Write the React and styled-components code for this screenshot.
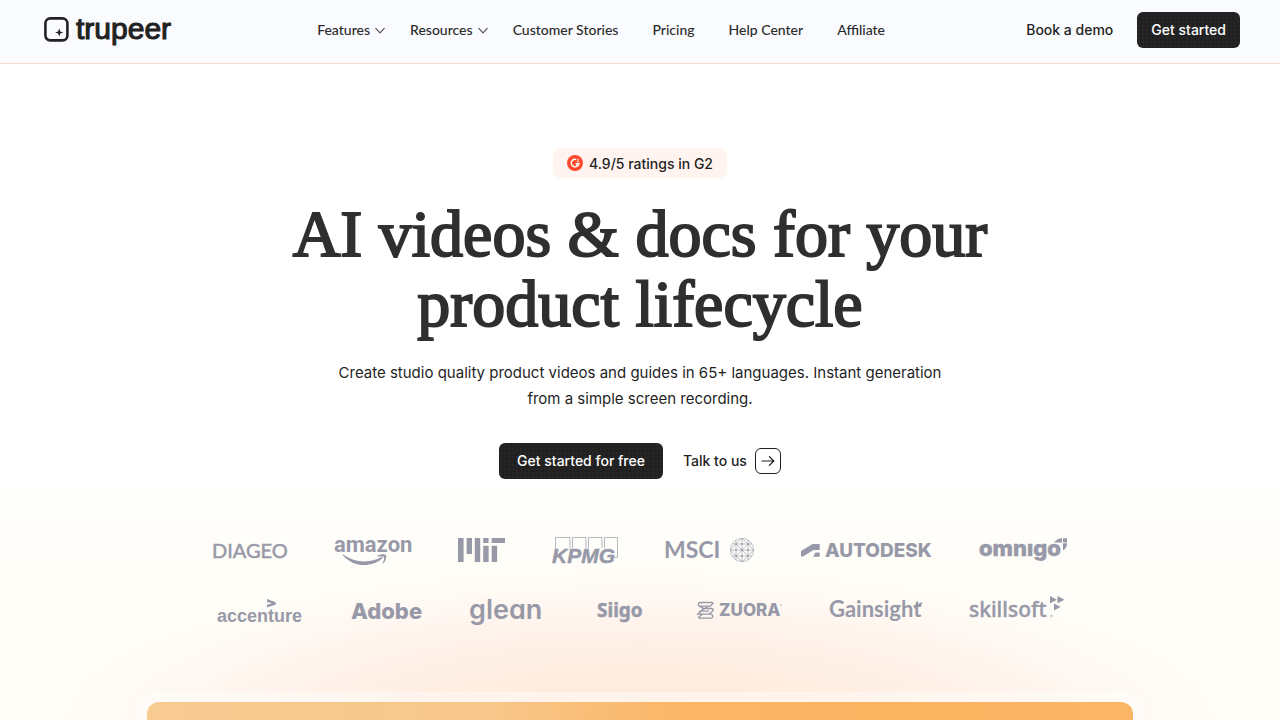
import React from 'react'
import styled, { createGlobalStyle } from 'styled-components'

//Styled-components

const GlobalStyle = createGlobalStyle`
    * {
        box-sizing: border-box;
    }
    body {
        margin: 0;
        background: #ffffff;
        color: #1f1f1f;
        font-family: Inter, sans-serif;
    }
`;

const Page = styled.div`
    min-height: 100vh;
    display: flex;
    flex-direction: column;
    overflow: hidden;
    background:
        radial-gradient(ellipse 580px 150px at 50% 100%, #ffeadb 0%, #ffeee2 40%, #fff4ed 68%, rgba(255, 250, 245, 0) 100%),
        linear-gradient(#ffffff 470px, #fffdf8 560px, #fffdf7 100%);
`;

const Header = styled.header`
    display: flex;
    align-items: center;
    justify-content: space-between;
    height: 64px;
    padding: 0 40px 4px 44px;
    background: #fafbfe;
    border-bottom: 1px solid #f8dccb;
`;

const HomeLink = styled.a`
    display: flex;
    color: #222222;
`;

const Nav = styled.nav`
    display: flex;
    align-items: center;
    gap: 34px;
`;

const NavGroup = styled.div`
    display: flex;
    gap: 24px;
    margin-right: -10px;
`;

const NavButton = styled.button`
    display: flex;
    align-items: center;
    gap: 4px;
    padding: 0;
    border: 0;
    background: none;
    color: #2b2b2b;
    font: 500 14px/20px Lato, sans-serif;
    cursor: pointer;
`;

const NavLink = styled.a`
    color: #2b2b2b;
    font: 500 14px/20px Lato, sans-serif;
    text-decoration: none;
`;

const Actions = styled.div`
    display: flex;
    align-items: center;
    gap: 24px;
`;

const TextLink = styled.a`
    display: flex;
    align-items: center;
    gap: 8px;
    color: #1f1f1f;
    font-size: 14px;
    font-weight: 500;
    line-height: 20px;
    text-decoration: none;
`;

const DarkButton = styled.button`
    height: 36px;
    padding: 0 ${props => props.$wide ? '18px' : '14px'};
    border: 0;
    border-radius: 6px;
    background-color: #212121;
    background-image: radial-gradient(#272727 1px, transparent 1px);
    background-size: 4px 4px;
    color: #ffffff;
    font: 500 14px/20px Inter, sans-serif;
    cursor: pointer;
`;

const Hero = styled.main`
    flex: 1;
    display: flex;
    flex-direction: column;
    align-items: center;
    padding-top: 84px;
`;

const Badge = styled.div`
    display: flex;
    align-items: center;
    gap: 6px;
    height: 30px;
    padding: 0 14px;
    border-radius: 8px;
    background: #fff4ef;
    font-size: 14px;
    font-weight: 500;
`;

const Title = styled.h1`
    max-width: 760px;
    margin: 21px 0 0;
    color: #2f2f2f;
    font: 400 66px/70px 'Liberation Serif', serif;
    text-align: center;
    -webkit-text-stroke: 2px #2f2f2f;
`;

const Subtitle = styled.p`
    max-width: 640px;
    margin: 21px 0 0;
    font-size: 15px;
    line-height: 26px;
    text-align: center;
`;

const Buttons = styled.div`
    display: flex;
    align-items: center;
    gap: 20px;
    margin-top: 31px;
`;

const ArrowBox = styled.span`
    display: flex;
    align-items: center;
    justify-content: center;
    width: 26px;
    height: 26px;
    border: 1px solid #1f1f1f;
    border-radius: 6px;
    background: #ffffff;
`;

const Logos = styled.div`
    display: flex;
    flex-direction: column;
    gap: 20px;
    margin-top: 51px;
    color: #9799a8;
`;

const LogoRow = styled.div`
    display: flex;
    justify-content: center;
    gap: ${props => props.$gap};
`;

const Logo = styled.svg`
    display: block;
    height: 40px;
    overflow: visible;
    fill: currentColor;
    font-family: ${props => props.$font || 'Inter'}, sans-serif;
    font-weight: ${props => props.$weight || 700};
    font-feature-settings: ${props => props.$features || 'normal'};
`;

const Frame = styled.section`
    flex: 1;
    display: flex;
    width: calc(100% - 274px);
    min-height: 28px;
    margin-top: 62px;
    padding: 10px 10px 0;
    border-radius: 20px 20px 0 0;
    background: rgba(255, 255, 255, 0.4);
`;

const VideoCard = styled.div`
    flex: 1;
    border-radius: 12px 12px 0 0;
    background: linear-gradient(100deg, #f7cb92 0%, #f8c78a 35%, #fbb565 55%, #fbb461 80%, #fab566 100%);
`;

function TrupeerLogo(){
    return (
        <svg width="132" height="40" viewBox="0 0 132 40" fill="currentColor" aria-label="trupeer">
            <rect x="1.4" y="8.4" width="22" height="22" rx="4.8" fill="none" stroke="currentColor" strokeWidth="2.6" />
            <path d="M15.2 18.400l1.100 3 3 1.100-3 1.100-1.100 3-1.100-3-3-1.100 3-1.100z" />
            <text x="32" y="29" fontFamily="Liberation Sans" fontSize="30" stroke="currentColor" strokeWidth="1.1">trupeer</text>
        </svg>
    )
}

function Chevron(){
    return (
        <svg width="12" height="12" viewBox="0 0 12 12" fill="none" stroke="#555555" strokeWidth="1.2" strokeLinecap="round" strokeLinejoin="round">
            <path d="M1.800 4.400L6 8.800 10.200 4.400" />
        </svg>
    )
}

function G2Icon(){
    return (
        <svg width="16" height="16" viewBox="0 0 16 16">
            <circle cx="8" cy="8" r="8" fill="#ff492c" />
            <path d="M9.2 4.4A3.8 3.8 0 1 0 10.4 11L9.3 9.2" fill="none" stroke="#ffffff" strokeWidth="1.5" />
            <path d="M10.4 11.2L12 8.6H8.6" fill="none" stroke="#ffffff" strokeWidth="1.4" />
            <path d="M9.9 4.6C10.3 3.7 11.8 3.9 11.7 4.9 11.6 5.7 10.1 5.9 10 6.8H11.9" fill="none" stroke="#ffffff" strokeWidth="0.8" />
        </svg>
    )
}

function ArrowIcon(){
    return (
        <svg width="14" height="12" viewBox="0 0 14 12" fill="none" stroke="#1f1f1f" strokeWidth="1.2" strokeLinecap="round" strokeLinejoin="round">
            <path d="M1 6H12.6M8.4 1.6L12.8 6 8.4 10.4" />
        </svg>
    )
}

function Clients(){
    return (
        <Logos>
            <LogoRow $gap="47px">
                <Logo width="75" $font="Lato" $weight="400">
                    <text x="-1" y="28" fontSize="20" stroke="currentColor" strokeWidth="0.5">DIAGEO</text>
                </Logo>
                <Logo width="76" $font="Roboto">
                    <text x="-1" y="22" fontSize="22">amazon</text>
                    <path d="M8.4 24.6C15 29.4 22 31.4 29.500 31.400c6.200 0 12.500-1.800 17.300-4.400.9-.4 1.500.6.7 1.200C43 32.500 36 35 29.300 35 21 35 13.600 31.600 8 25.400c-.4-.5 0-1.100.4-.8z" />
                    <path d="M42.400 25.700c2.200-1.500 7.100-2 8.500-.7 1 1.300-.2 6.100-2.500 8.400-.4.300-.8.100-.6-.4.900-2 1.900-5.100 1.200-5.900-.8-.9-4.200-.7-6.100-.5-.6.100-.9-.6-.5-.9z" />
                </Logo>
                <Logo width="47">
                    <path d="M0 8h5.600v24H0zM8.600 8H14v16H8.600zM16.800 8h5.400v24h-5.400zM25.200 8h5.400v5h-5.400zM25.200 15.700h5.400V32h-5.400zM33.700 8H47v5H33.700zM33.700 15.700h5.400V32h-5.400z" />
                </Logo>
                <Logo width="66" $font="'Liberation Sans'">
                    <path d="M3.500 22V7.500H18V18M20.500 18V7.500H34V18M36.500 18V7.500H50V18M52.500 18V7.500H65.500V27.500H62" fill="none" stroke="currentColor" strokeWidth="0.7" />
                    <text x="0" y="33" fontSize="21" fontStyle="italic" stroke="currentColor" strokeWidth="0.5">KPMG</text>
                </Logo>
                <Logo width="89" $font="Lato">
                    <text x="-1" y="28" fontSize="23">MSCI</text>
                    <g fill="none" stroke="currentColor" strokeWidth="0.6">
                        <circle cx="77" cy="20" r="11.600" />
                        <path d="M77 8.400V31.600M65.400 20H88.600M71 10V30M83 10V30M67 14H87M67 26H87M71 14L83 26M83 14L71 26M77 8.400L71 14 65.400 20 71 26 77 31.600 83 26 88.600 20 83 14z" />
                    </g>
                    <path d="M76.200 13.200h1.600v1.600h-1.600zM70.200 13.200h1.600v1.600h-1.600zM82.200 13.200h1.600v1.600h-1.600zM76.200 19.200h1.600v1.600h-1.600zM70.200 19.200h1.600v1.600h-1.600zM82.200 19.200h1.600v1.600h-1.600zM76.200 25.200h1.600v1.600h-1.600zM70.200 25.200h1.600v1.600h-1.600zM82.200 25.200h1.600v1.600h-1.600z" />
                </Logo>
                <Logo width="131" $weight="800">
                    <path d="M0 26.500V21L11.500 14H18.700V20H12.500L2 26.500zM12 26.800L14.500 22.500H18.700V26.800z" />
                    <text x="24" y="27" fontSize="19">AUTODESK</text>
                </Logo>
                <Logo width="88" $weight="800">
                    <text x="0" y="26" fontSize="22" stroke="currentColor" strokeWidth="0.5">omnıgo</text>
                    <path d="M75 12.500C77.500 9.500 80 8.300 83 8.300V12.500zM84 8.300H88V12.500H84zM84 13.300H88C88 16.500 87 18.600 84 20.500z" />
                </Logo>
            </LogoRow>
            <LogoRow $gap="48px">
                <Logo width="86" $font="'Liberation Sans'">
                    <text x="0" y="32" fontSize="18">accenture</text>
                    <path d="M50 9L58.800 12.200V14.400L50 17.600V14.700L55 13.300 50 11.900z" />
                </Logo>
                <Logo width="70" $weight="800">
                    <text x="0" y="29" fontSize="22">Adobe</text>
                </Logo>
                <Logo width="72" $weight="600" $features="'cv11'">
                    <text x="0" y="29" fontSize="27">glean</text>
                </Logo>
                <Logo width="60" $font="'Noto Sans'">
                    <text x="8" y="27" fontSize="19" stroke="currentColor" strokeWidth="0.5">Siigo</text>
                </Logo>
                <Logo width="85" $weight="800">
                    <path d="M1.500 16.200H13.500L16 13.200 14.800 12.500H3.200C1 12.500.8 15 2.200 16.200L7 18.500M5 18.500H14.500C17 18.800 16.500 20.500 15.500 21.200L11.500 24.500M12 21.200H4L.8 24.200H13.500C16.500 24.500 16.300 28.200 13.800 28.200H2.500L1.500 27.200 5.500 24.200M11.500 16.200L2.500 21.600" fill="none" stroke="currentColor" strokeWidth="1.300" />
                    <text x="22" y="26" fontSize="17">ZUORA</text>
                    <circle cx="84" cy="15" r="0.700" />
                </Logo>
                <Logo width="92" $font="Lato">
                    <text x="-1" y="27" fontSize="22">Gainsight</text>
                    <path d="M84 16.500C86.500 16 88 13.500 92 12.300V14.300C89.500 15.500 88 18 84 18.500z" />
                </Logo>
                <Logo width="94" $font="'Noto Sans'" $weight="500">
                    <text x="-1" y="27" fontSize="21" stroke="currentColor" strokeWidth="0.4">skillsoft</text>
                    <path d="M80 6L87 9.700 80 13.300zM87.500 6L94.500 9.700 87.500 13.300zM84 13.500L90.500 17 84 20.500z" />
                    <circle cx="81.500" cy="26" r="1" fill="none" stroke="currentColor" strokeWidth="0.500" />
                </Logo>
            </LogoRow>
        </Logos>
    )
}

export default function App(){
    return (
        <Page>
            <GlobalStyle />
            <Header>
                <HomeLink href="#"><TrupeerLogo /></HomeLink>
                <Nav>
                    <NavGroup>
                        <NavButton type="button">Features <Chevron /></NavButton>
                        <NavButton type="button">Resources <Chevron /></NavButton>
                    </NavGroup>
                    <NavLink href="#">Customer Stories</NavLink>
                    <NavLink href="#">Pricing</NavLink>
                    <NavLink href="#">Help Center</NavLink>
                    <NavLink href="#">Affiliate</NavLink>
                </Nav>
                <Actions>
                    <TextLink href="#">Book a demo</TextLink>
                    <DarkButton type="button">Get started</DarkButton>
                </Actions>
            </Header>
            <Hero>
                <Badge><G2Icon />4.9/5 ratings in G2</Badge>
                <Title>AI videos &amp; docs for your product lifecycle</Title>
                <Subtitle>
                    Create studio quality product videos and guides in 65+ languages. Instant generation from a simple screen recording.
                </Subtitle>
                <Buttons>
                    <DarkButton type="button" $wide>Get started for free</DarkButton>
                    <TextLink href="#">Talk to us <ArrowBox><ArrowIcon /></ArrowBox></TextLink>
                </Buttons>
                <Clients />
                <Frame>
                    <VideoCard />
                </Frame>
            </Hero>
        </Page>
    )
}
